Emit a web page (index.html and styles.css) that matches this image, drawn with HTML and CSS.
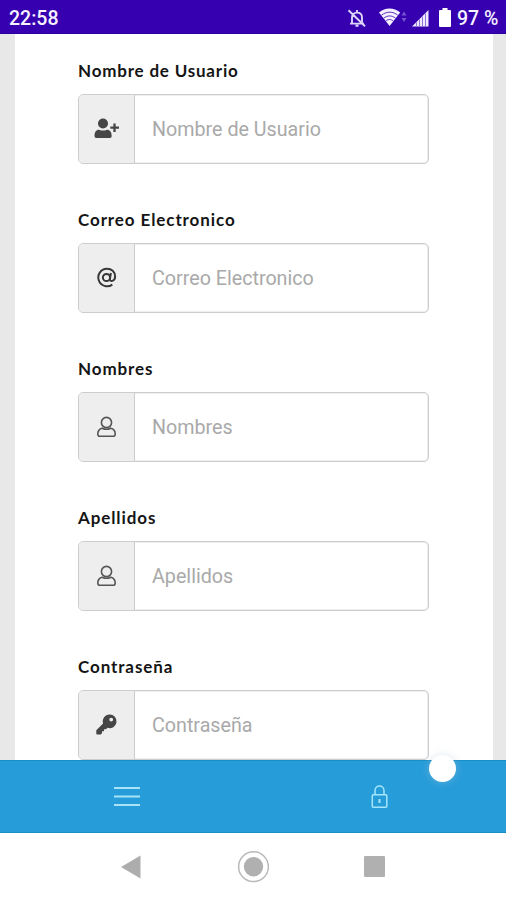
FILE: index.html
```html
<!DOCTYPE html>
<html lang="es">
<head>
<meta charset="utf-8">
<title>Registro</title>
<link rel="stylesheet" href="styles.css">
</head>
<body>
<div class="screen">
  <header class="status">
    <span class="time">22:58</span>
    <svg class="bell" width="20" height="20" viewBox="0 0 20 20" fill="none" stroke="#ddd5f7" stroke-width="1.9"><path d="M5 15.200V9.500C5 6.500 7 4.600 10 4.600s5 1.900 5 4.900v5.700M3 15.600h14M10 2v2.500M8.500 17.700h3M1.500 2.200l16.500 16"/></svg>
    <svg class="wifi" width="28" height="19" viewBox="0 0 28 19"><path d="M0 4.500C6-.8 15-.8 21.200 4.500L10.600 18z" fill="#f4f0ff"/><path d="M2.500 7.200c5-4 11.500-4 16.300 0M4.700 10.200c4-3 8-3 12 0M6.800 13c2.500-2 5-2 7.500 0" fill="none" stroke="#3600b0" stroke-width=".8"/><path d="M22.500 7.500l2.500-4 2.500 4zM22.500 10l2.500 4 2.500-4z" fill="#7654cb"/></svg>
    <svg class="signal" width="17" height="18" viewBox="0 0 17 18"><path d="M0 17.500L16.500 1v16.500z" fill="#eee8ff"/><path d="M4.500 13.500v3.500M7.500 10.500v6.500M10.500 7.500v9.500M13.500 4.500v12.500" stroke="#7654cb" stroke-width=".8"/></svg>
    <svg class="battery" width="12" height="19" viewBox="0 0 12 19"><path d="M3.500 0h5v2H11q1 0 1 1v15q0 1-1 1H1q-1 0-1-1V3q0-1 1-1h2.500z" fill="#fff"/></svg>
    <span class="percent">97 %</span>
  </header>

  <main class="page">
    <form class="form">
      <div class="field">
        <label class="label tight" for="usuario">Nombre de Usuario</label>
        <div class="group">
          <span class="addon"><svg width="26" height="22" viewBox="0 0 26 22" fill="#464646"><circle cx="9" cy="5.500" r="5"/><path d="M.5 18c0-4 1.500-6.300 4.500-6.300q4 1.700 8 0c3 0 4.700 2.300 4.700 6.300q0 2-1.700 2H2.200q-1.700 0-1.700-2z"/><path d="M20.500 5.500V14M16.300 9.700H25" stroke="#464646" stroke-width="2.300"/></svg></span>
          <input class="input" id="usuario" type="text" placeholder="Nombre de Usuario">
        </div>
      </div>
      <div class="field">
        <label class="label" for="correo">Correo Electronico</label>
        <div class="group">
          <span class="addon"><svg width="22" height="22" viewBox="0 0 22 22" fill="none" stroke="#383838" stroke-width="2"><circle cx="10.500" cy="10.500" r="3.600"/><path d="M14.900 6l-1 6c-.4 3.400 5.200 2.500 5.200-2.400C19.100 4.700 15.500 1.700 11 1.700a8.800 8.800 0 1 0 5.300 15.900"/></svg></span>
          <input class="input" id="correo" type="text" placeholder="Correo Electronico">
        </div>
      </div>
      <div class="field">
        <label class="label" for="nombres">Nombres</label>
        <div class="group">
          <span class="addon"><svg width="20" height="22" viewBox="0 0 20 22" fill="none" stroke="#555" stroke-width="1.600"><circle cx="9.500" cy="6.500" r="5.100"/><path d="M5.300 12.200C2.500 12.800.8 15 .8 18q0 2.300 2 2.300h13.400q2 0 2-2.300c0-3-1.700-5.200-4.500-5.800q-4.200 2.200-8.400 0z"/></svg></span>
          <input class="input" id="nombres" type="text" placeholder="Nombres">
        </div>
      </div>
      <div class="field">
        <label class="label" for="apellidos">Apellidos</label>
        <div class="group">
          <span class="addon"><svg width="20" height="22" viewBox="0 0 20 22" fill="none" stroke="#555" stroke-width="1.600"><circle cx="9.500" cy="6.500" r="5.100"/><path d="M5.300 12.200C2.500 12.800.8 15 .8 18q0 2.300 2 2.300h13.400q2 0 2-2.300c0-3-1.700-5.200-4.500-5.800q-4.200 2.200-8.400 0z"/></svg></span>
          <input class="input" id="apellidos" type="text" placeholder="Apellidos">
        </div>
      </div>
      <div class="field">
        <label class="label" for="clave">Contraseña</label>
        <div class="group">
          <span class="addon"><svg width="22" height="22" viewBox="0 0 22 22"><path fill="#464646" fill-rule="evenodd" d="M13.500.5a6.800 6.800 0 1 1-2 13.200L10 15.300H8v2H6v2l-1.200 1.200H1q-.7 0-.7-.7v-3.500l6.800-6.700A6.800 6.800 0 0 1 13.500.5zM15.200 3.700a1.900 1.900 0 1 0 0 3.800 1.900 1.900 0 0 0 0-3.800z"/></svg></span>
          <input class="input" id="clave" type="text" placeholder="Contraseña">
        </div>
      </div>
    </form>
  </main>

  <nav class="tabs">
    <span class="tab"><svg width="26" height="22" viewBox="0 0 26 22" stroke="#a8e3f8" stroke-width="2"><path d="M0 2h26M0 10.500h26M0 19h26"/></svg></span>
    <span class="tab"><svg width="18" height="26" viewBox="0 0 18 26" fill="none" stroke="#a5e6fb" stroke-width="1.500"><rect x="1.300" y="10.700" width="14.500" height="12.600" rx="1"/><path d="M4 10.500V7c0-6.600 9-6.600 9 0v3.500"/><path d="M8.500 15v4" stroke-width="2"/></svg></span>
    <span class="touch"></span>
  </nav>

  <footer class="system">
    <svg class="back" width="20" height="24" viewBox="0 0 20 24"><path d="M0 12L19.500.5v23z" fill="#adadad"/></svg>
    <svg class="home" width="32" height="32" viewBox="0 0 32 32"><circle cx="16.500" cy="15.700" r="14.900" fill="none" stroke="#b8b8b8" stroke-width="1.500"/><circle cx="16.500" cy="15.700" r="9.700" fill="#b0b0b0"/></svg>
    <span class="recent"></span>
  </footer>
</div>
</body>
</html>
```

FILE: styles.css
```css
* {
  box-sizing: border-box;
}

body {
  margin: 0;
  background: #fff;
  font-family: Roboto, "Liberation Sans", sans-serif;
}

.screen {
  display: flex;
  flex-direction: column;
  width: 506px;
  height: 900px;
  overflow: hidden;
}

.status {
  display: flex;
  flex: none;
  align-items: center;
  height: 34px;
  padding: 2px 8px 0 9px;
  background: #3600b0;
  border-bottom: 1px solid #2a00a0;
  color: #f6f2ff;
  font-size: 19.500px;
  font-weight: 500;
  white-space: nowrap;
}

.time {
  width: 52px;
  padding-top: 1px;
}

.bell {
  margin-left: auto;
}

.wifi {
  margin-left: 12px;
}

.signal {
  margin-left: 5px;
}

.battery {
  margin: 0 6px 0 10px;
}

.percent {
  width: 41px;
  padding-top: 1px;
}

.page {
  flex: none;
  height: 726px;
  padding: 0 13px 0 15px;
  overflow: hidden;
  background: #e8e8e8;
}

.form {
  height: 726px;
  padding: 25px 64px 0 63px;
  background: #fff;
}

.field {
  height: 149.100px;
}

.label {
  display: block;
  height: 35px;
  color: #151515;
  font: 700 17px/24px Lato, "Open Sans", sans-serif;
  letter-spacing: 0.9px;
}

.tight {
  letter-spacing: 0.8px;
}

.group {
  display: flex;
  height: 70px;
  border: 1px solid #cdcdcd;
  border-radius: 5px;
  box-shadow: inset 0 0 0 1px #eee;
  overflow: hidden;
}

.addon {
  display: flex;
  flex: none;
  align-items: center;
  justify-content: center;
  width: 56px;
  border-right: 1px solid #ccc;
  background: #eee;
}

.input {
  flex: 1;
  min-width: 0;
  padding: 2px 17px 0;
  border: 0;
  outline: 0;
  background: transparent;
  font: 400 19.700px/24px Roboto, sans-serif;
}

.input::placeholder {
  color: #a9a9a9;
  opacity: 1;
}

.tabs {
  position: relative;
  display: flex;
  flex: none;
  height: 73px;
  background: #269cd9;
  border-top: 1px solid #168fc4;
  border-bottom: 1px solid #178fc5;
}

.tab {
  display: flex;
  flex: 1;
  align-items: center;
  justify-content: center;
}

.touch {
  position: absolute;
  top: -6px;
  left: 429px;
  width: 27px;
  height: 27px;
  border-radius: 50%;
  background: #fff;
  box-shadow: 0 0 8px rgba(180, 200, 220, 0.45);
}

.system {
  display: flex;
  flex: 1;
  align-items: center;
  justify-content: space-between;
  padding: 0 121px;
  background: #fff;
}

.recent {
  width: 21px;
  height: 21px;
  border-radius: 1px;
  background: #b0b0b0;
}
```
